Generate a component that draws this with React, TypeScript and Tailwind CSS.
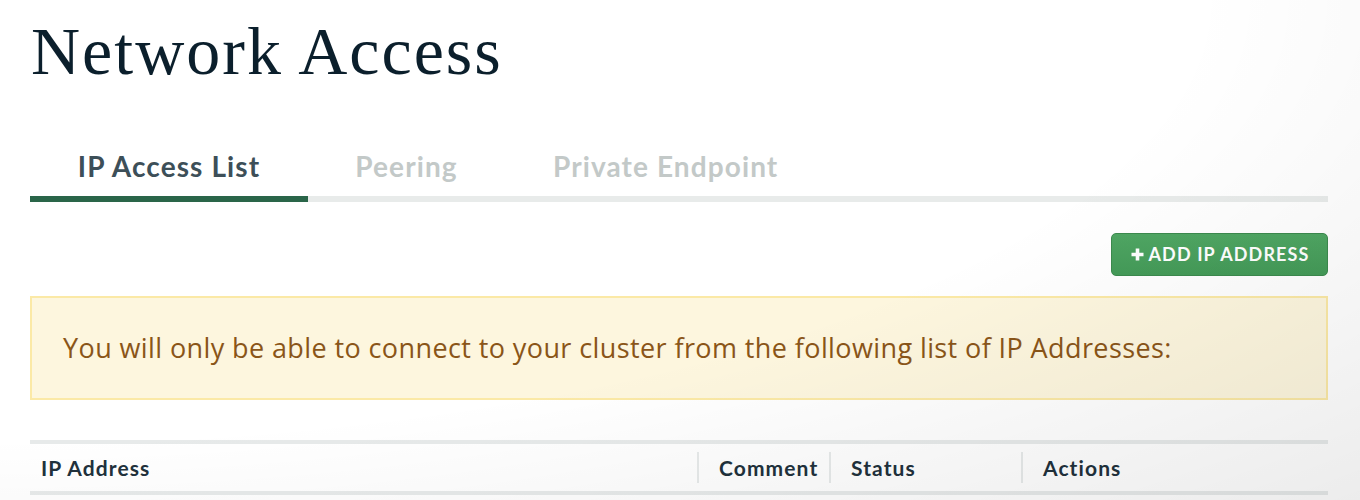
import React from "react";

const sans = "font-['Lato','Open_Sans',sans-serif]";

export default function App() {
  return (
    <div className="relative w-[1360px] h-[500px] overflow-hidden bg-white">
      <div className={`px-[32px] pl-[30px] ${sans}`}>
        <h1 className="pt-[11px] font-['Liberation_Serif',serif] text-[68px] leading-[80px] tracking-[2px] text-[#0b1f2c] pl-[1px]">
          Network Access
        </h1>

        <div className="mt-[59px] flex border-b-[6px] border-[#e8ebea] text-[28px] leading-[32px] font-bold tracking-[1.1px]">
          <div className="-mb-[6px] border-b-[6px] border-[#2a6549] w-[278px] pb-[14px] text-center text-[#3d4f58]">
            IP Access List
          </div>
          <div className="-mb-[6px] border-b-[6px] border-transparent w-[197px] pb-[14px] text-center text-[#c3c9c8]">
            Peering
          </div>
          <div className="-mb-[6px] border-b-[6px] border-transparent px-[48px] pb-[14px] text-center text-[#c3c9c8]">
            Private Endpoint
          </div>
        </div>

        <div className="mt-[31px] flex justify-end">
          <button className="flex h-[43px] w-[217px] items-center justify-center gap-[4px] rounded-[5px] border border-[#3c8a4e] bg-gradient-to-b from-[#4fa663] to-[#449a58] text-[18px] font-bold tracking-[1.1px] text-white">
            <svg width="15" height="15" viewBox="0 0 15 15">
              <path d="M7.5 1.5v12M1.5 7.5h12" stroke="white" strokeWidth="3.6" />
            </svg>
            ADD IP ADDRESS
          </button>
        </div>

        <div className="mt-[20px] flex h-[104px] items-center border-2 border-[#fbe9a6] bg-[#fdf6de] pl-[31px] font-['Open_Sans',sans-serif] text-[27px] tracking-[0.4px] text-[#8a5518]">
          You will only be able to connect to your cluster from the following list of IP Addresses:
        </div>

        <div className="mt-[40px] grid grid-cols-[667px_132px_192px_1fr] border-y-4 border-[#e7eaea] py-[8px] text-[21px] tracking-[1.1px] font-bold text-[#21313c]">
          <div className="flex h-[31px] items-center pl-[11px]">IP Address</div>
          <div className="flex h-[31px] items-center border-l-2 border-[#e7eaea] pl-[20px]">Comment</div>
          <div className="flex h-[31px] items-center border-l-2 border-[#e7eaea] pl-[20px]">Status</div>
          <div className="flex h-[31px] items-center border-l-2 border-[#e7eaea] pl-[20px]">Actions</div>
        </div>
      </div>

      <div className="pointer-events-none absolute inset-0 bg-[radial-gradient(ellipse_at_top_left,rgba(0,0,0,0)_62%,rgba(0,0,0,0.075)_100%)]" />
    </div>
  );
}
